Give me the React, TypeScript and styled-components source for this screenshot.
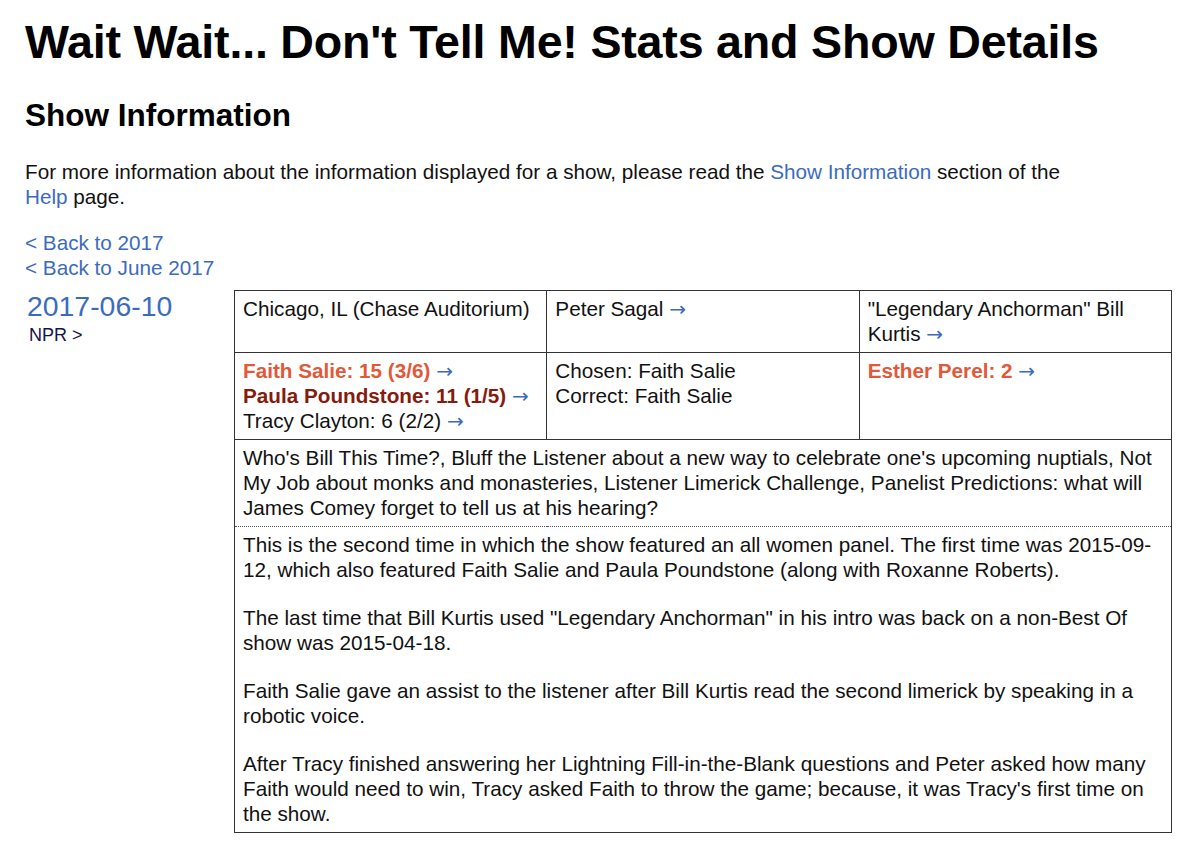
import React from "react";
import styled, { createGlobalStyle } from "styled-components";

const Global = createGlobalStyle`
  html, body { margin: 0; padding: 0; background: #fff; }
  body { font-family: "Liberation Sans", Arial, Helvetica, sans-serif; color: #111; }
`;

const Page = styled.div`
  padding: 14px 25px 0 25px;
  font-size: 20.7px;
  line-height: 25px;
`;

const Title = styled.h1`
  font-size: 46.6px;
  line-height: 56px;
  font-weight: bold;
  margin: 0 0 27px 0;
  color: #000;
  letter-spacing: -0.2px;
`;

const SubTitle = styled.h2`
  font-size: 31.5px;
  line-height: 36px;
  font-weight: bold;
  margin: 0 0 26px 0;
  color: #000;
`;

const Para = styled.p`
  margin: 0 0 21px 0;
  max-width: 1060px;
`;

const Link = styled.a`
  color: #3b6bbf;
  text-decoration: none;
`;

const BackLinks = styled.div`
  display: flex;
  flex-direction: column;
  margin-bottom: 10px;
`;

const ShowRow = styled.div`
  display: flex;
  align-items: flex-start;
`;

const DateCol = styled.div`
  box-sizing: border-box;
  width: 209px;
  flex: none;
  display: flex;
  flex-direction: column;
  padding-left: 2px;
`;

const DateLink = styled.a`
  color: #3b6bbf;
  font-size: 28.4px;
  line-height: 32px;
  text-decoration: none;
`;

const NprLink = styled.a`
  color: #14144a;
  font-size: 18px;
  line-height: 20px;
  margin: 3px 0 0 2px;
  text-decoration: none;
`;

const Table = styled.table`
  border-collapse: collapse;
  width: 938px;
  table-layout: fixed;
  font-size: 20.7px;
  line-height: 25px;
`;

const Cell = styled.td<{ $dottedBottom?: boolean; $dottedTop?: boolean }>`
  border: 1px solid #333;
  ${(p) => (p.$dottedBottom ? "border-bottom: 1px dotted #555;" : "")}
  ${(p) => (p.$dottedTop ? "border-top: 1px dotted #555;" : "")}
  padding: 5px 8px 6px 8px;
  vertical-align: top;
`;

const Arrow = styled.a`
  color: #3b6bbf;
  text-decoration: none;
  font-weight: normal;
  font-family: "DejaVu Sans", sans-serif;
  font-size: 20px;
  line-height: 0;
`;

const Line = styled.div<{ $color?: string; $bold?: boolean }>`
  color: ${(p) => p.$color || "#111"};
  font-weight: ${(p) => (p.$bold ? "bold" : "normal")};
  height: 25px;
`;

const Note = styled.p`
  margin: 0 0 23px 0;
  &:last-child { margin-bottom: 0; }
`;

export default function App() {
  return (
    <>
      <Global />
      <Page>
        <Title>Wait Wait... Don't Tell Me! Stats and Show Details</Title>
        <SubTitle>Show Information</SubTitle>
        <Para>
          For more information about the information displayed for a show, please read the{" "}
          <Link href="#">Show Information</Link> section of the <Link href="#">Help</Link> page.
        </Para>
        <BackLinks>
          <Link href="#">&lt; Back to 2017</Link>
          <Link href="#">&lt; Back to June 2017</Link>
        </BackLinks>
        <ShowRow>
          <DateCol>
            <DateLink href="#">2017-06-10</DateLink>
            <NprLink href="#">NPR &gt;</NprLink>
          </DateCol>
          <Table>
            <tbody>
              <tr>
                <Cell>Chicago, IL (Chase Auditorium)</Cell>
                <Cell>
                  Peter Sagal <Arrow href="#">→</Arrow>
                </Cell>
                <Cell>
                  "Legendary Anchorman" Bill Kurtis <Arrow href="#">→</Arrow>
                </Cell>
              </tr>
              <tr>
                <Cell>
                  <Line $color="#e2593a" $bold>
                    Faith Salie: 15 (3/6) <Arrow href="#">→</Arrow>
                  </Line>
                  <Line $color="#861b0d" $bold>
                    Paula Poundstone: 11 (1/5) <Arrow href="#">→</Arrow>
                  </Line>
                  <Line>
                    Tracy Clayton: 6 (2/2) <Arrow href="#">→</Arrow>
                  </Line>
                </Cell>
                <Cell>
                  <Line>Chosen: Faith Salie</Line>
                  <Line>Correct: Faith Salie</Line>
                </Cell>
                <Cell>
                  <Line $color="#e2593a" $bold>
                    Esther Perel: 2 <Arrow href="#">→</Arrow>
                  </Line>
                </Cell>
              </tr>
              <tr>
                <Cell colSpan={3} $dottedBottom>
                  Who's Bill This Time?, Bluff the Listener about a new way to celebrate one's upcoming nuptials, Not My Job about monks and monasteries, Listener Limerick Challenge, Panelist Predictions: what will James Comey forget to tell us at his hearing?
                </Cell>
              </tr>
              <tr>
                <Cell colSpan={3} $dottedTop>
                  <Note>
                    This is the second time in which the show featured an all women panel. The first time was 2015-09-12, which also featured Faith Salie and Paula Poundstone (along with Roxanne Roberts).
                  </Note>
                  <Note>
                    The last time that Bill Kurtis used "Legendary Anchorman" in his intro was back on a non-Best Of show was 2015-04-18.
                  </Note>
                  <Note>
                    Faith Salie gave an assist to the listener after Bill Kurtis read the second limerick by speaking in a robotic voice.
                  </Note>
                  <Note>
                    After Tracy finished answering her Lightning Fill-in-the-Blank questions and Peter asked how many Faith would need to win, Tracy asked Faith to throw the game; because, it was Tracy's first time on the show.
                  </Note>
                </Cell>
              </tr>
            </tbody>
          </Table>
        </ShowRow>
      </Page>
    </>
  );
}
